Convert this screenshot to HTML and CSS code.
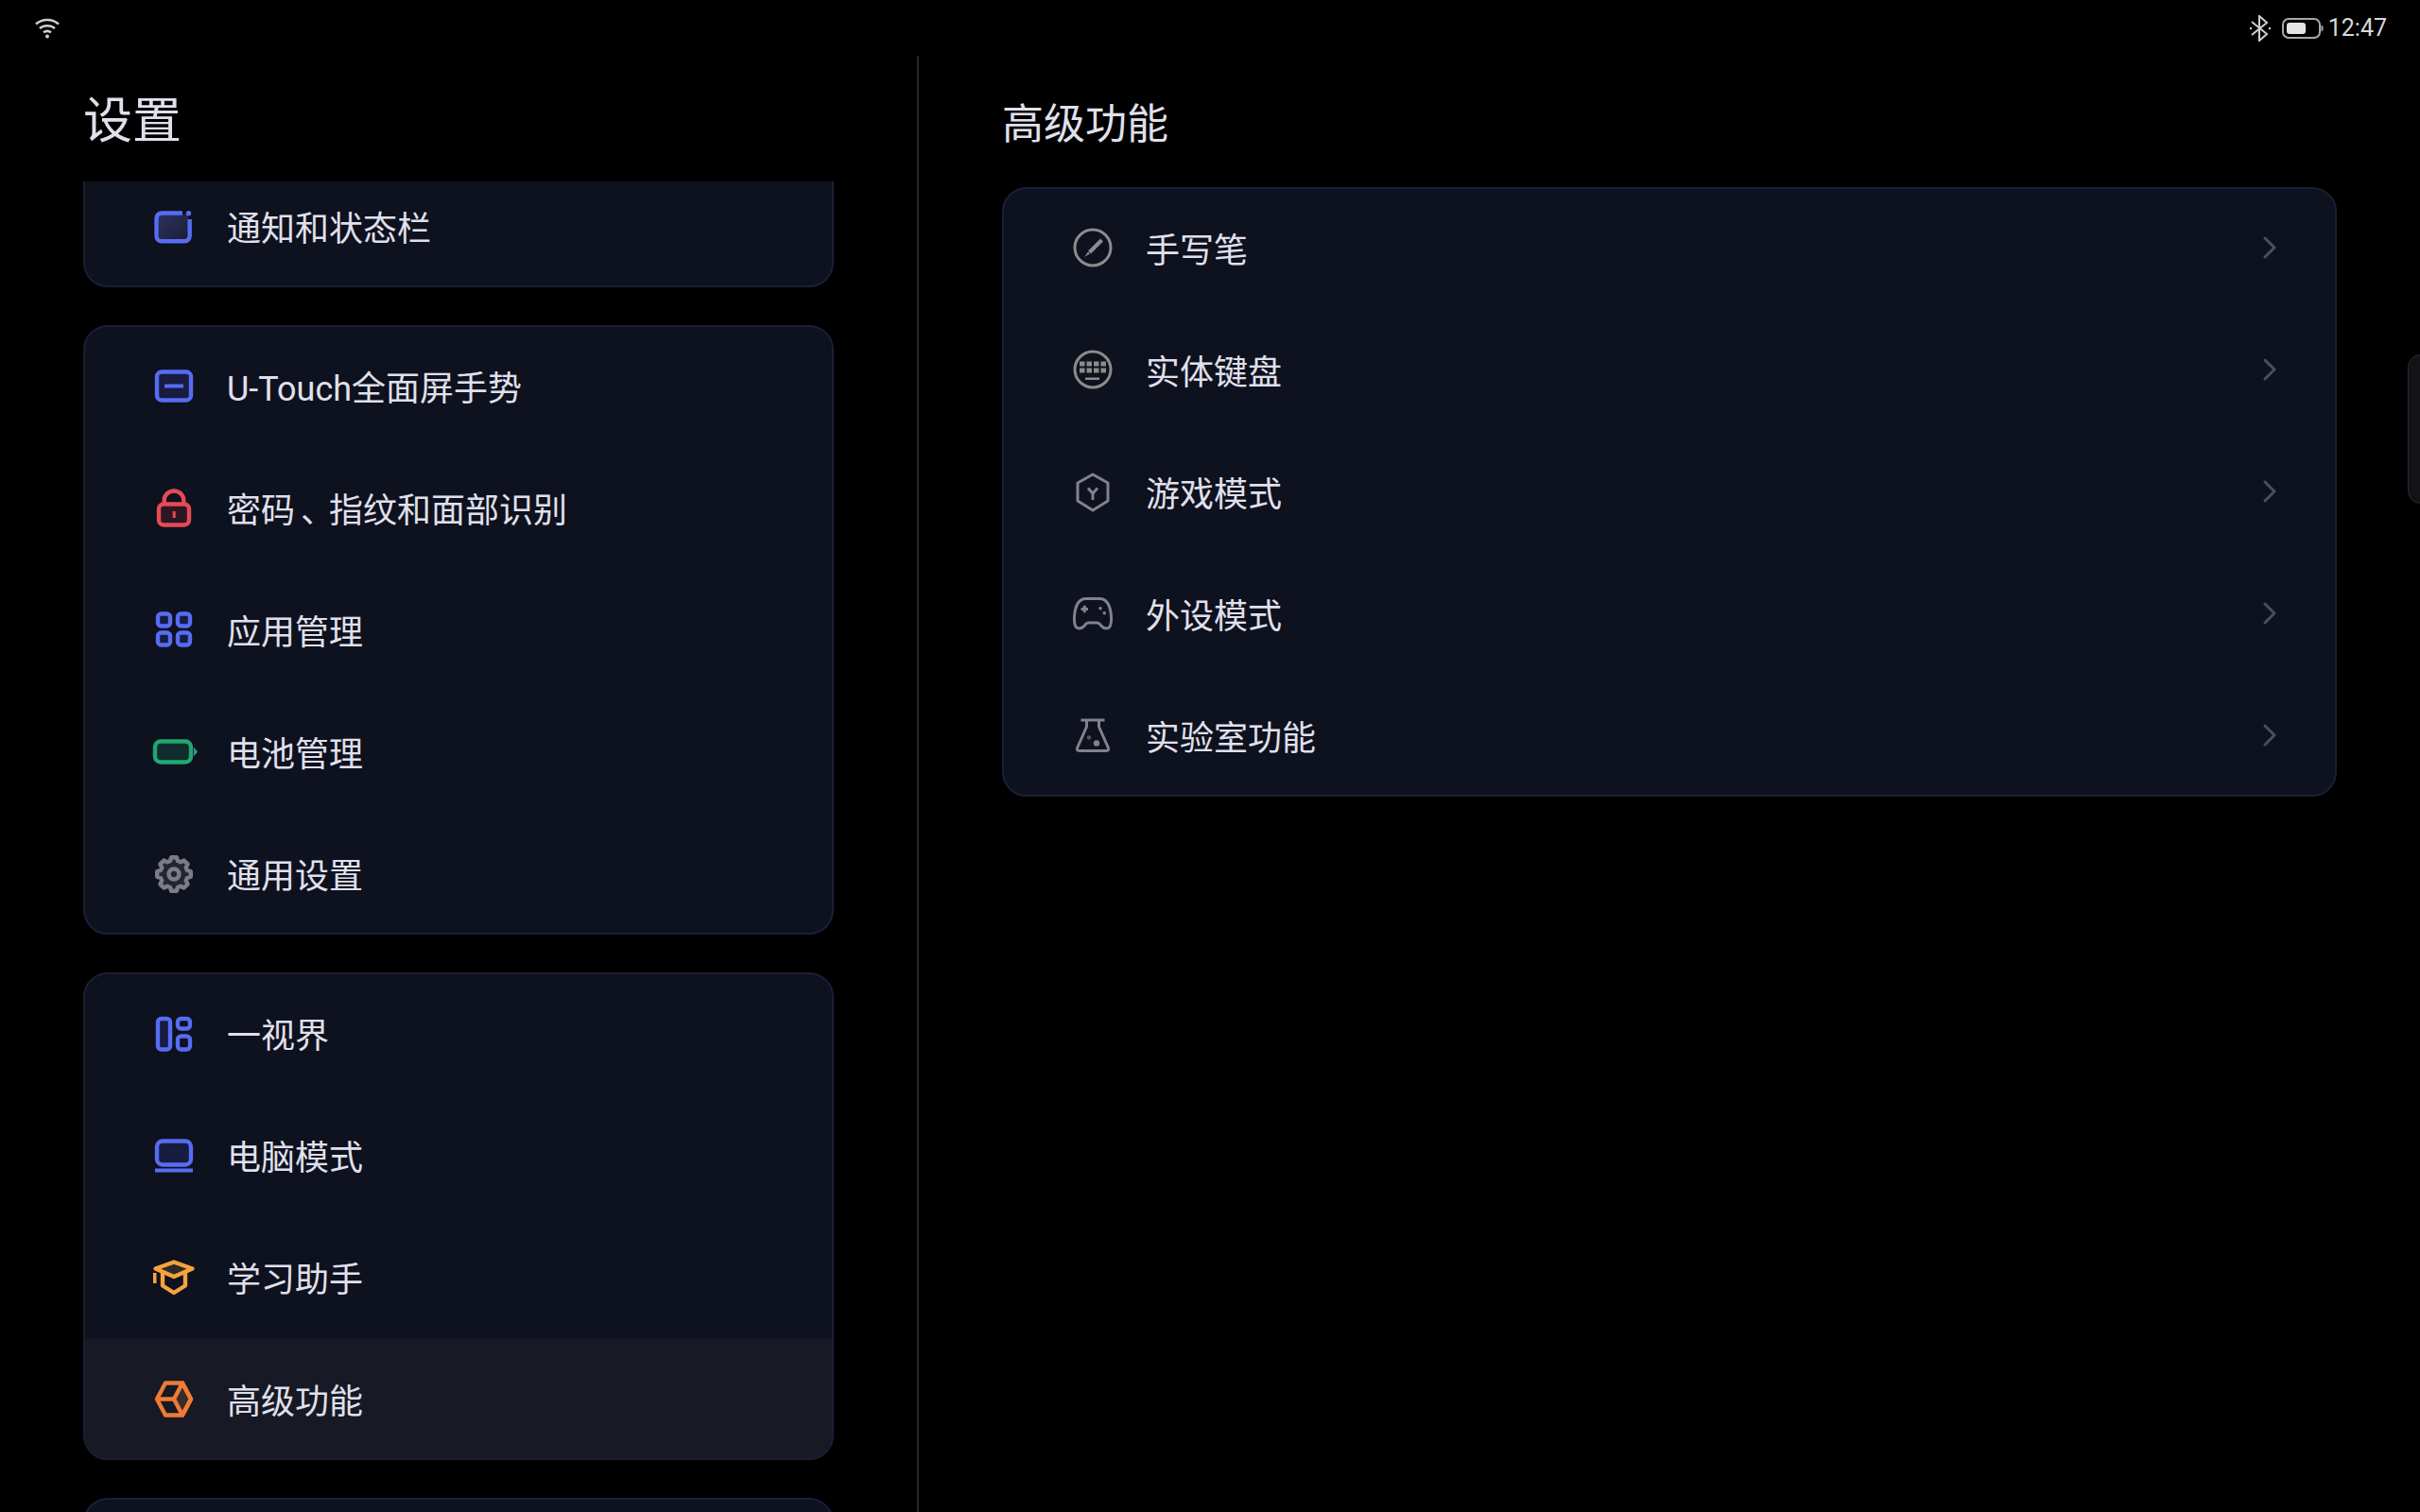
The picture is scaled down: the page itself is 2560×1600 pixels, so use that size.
FILE: index.html
```html
<!DOCTYPE html>
<html lang="zh-CN">
  <head>
    <meta charset="UTF-8" />
    <title>设置</title>
    <link rel="stylesheet" href="styles.css">
  </head>
  <body>
    <div class="statusbar">
      <svg class="wifi" width="28" height="24" viewBox="0 0 28 24">
        <path d="M2 7.5C9 1.5 19 1.5 26 7.5" />
        <path d="M6 12C10.5 8.3 17.5 8.3 22 12" />
        <path d="M10 16.3C12.4 14.6 15.6 14.6 18 16.3" />
        <circle class="solid" cx="14" cy="20.5" r="2" />
      </svg>
      <div class="status-right">
        <svg class="bt" width="24" height="28" viewBox="0 0 24 28">
          <path d="M3 7L19 20L11 27V1L19 8L3 21" />
          <circle class="solid" cx="2" cy="14" r="1.2" />
          <circle class="solid" cx="22" cy="14" r="1.2" />
        </svg>
        <svg class="batt" width="44" height="22" viewBox="0 0 44 22">
          <rect class="batt-case" x="1" y="1" width="39" height="20" rx="6" />
          <rect class="batt-level" x="5" y="5" width="20" height="12" rx="3" />
          <path class="batt-tip" d="M41.5 7.5L43.5 9V13L41.5 14.5Z" />
        </svg>
        <span class="time">12:47</span>
      </div>
    </div>

    <div class="main">
      <div class="left-pane">
        <h1 class="page-title">设置</h1>
        <div class="scroll">
          <div class="card card-scrolled">
            <div class="row">
              <svg class="icon blue" viewBox="0 0 48 48">
                <defs>
                  <linearGradient id="noticeFill" x1="0" y1="0" x2="1" y2="1">
                    <stop offset="0" stop-color="#2c3060" />
                    <stop offset="1" stop-color="#1c1f36" />
                  </linearGradient>
                </defs>
                <rect class="notice-fill" x="7" y="11" width="32" height="27" />
                <path d="M33 9.5H11a5.5 5.5 0 0 0-5.5 5.5V33.7a5.5 5.5 0 0 0 5.5 5.5H35.2a5.5 5.5 0 0 0 5.5-5.5V16" />
                <circle class="solid" cx="39.5" cy="9.8" r="2.7" />
              </svg>
              <span class="label">通知和状态栏</span>
            </div>
          </div>

          <div class="card">
            <div class="row">
              <svg class="icon blue" viewBox="0 0 48 48">
                <rect class="tint" x="6" y="8.5" width="36" height="30" rx="5" />
                <rect class="solid" x="14" y="21.5" width="20" height="4" />
              </svg>
              <span class="label">U-Touch全面屏手势</span>
            </div>
            <div class="row">
              <svg class="icon red" viewBox="0 0 48 48">
                <path d="M13.7 18V15.5a10.3 10 0 0 1 20.6 0V18" />
                <rect class="tint" x="8" y="19.5" width="32" height="22" rx="5" />
                <rect class="solid" x="22.7" y="27" width="3" height="7" />
              </svg>
              <span class="label">密<span class="stretch">码</span><span class="pinch">、</span>指纹和面部识别</span>
            </div>
            <div class="row">
              <svg class="icon blue" viewBox="0 0 48 48">
                <rect class="tint" x="7" y="6.5" width="13" height="13" rx="3.5" />
                <rect class="tint" x="28" y="6.5" width="13" height="13" rx="3.5" />
                <rect class="tint" x="7" y="26.5" width="13" height="13" rx="3.5" />
                <rect class="tint" x="28" y="26.5" width="13" height="13" rx="3.5" />
              </svg>
              <span class="label">应用管理</span>
            </div>
            <div class="row">
              <svg class="icon green" viewBox="0 0 48 48">
                <rect class="tint" x="4" y="12.5" width="38" height="22" rx="6" />
                <path class="solid" d="M45 18.5L49 23.5L45 28.5Z" />
              </svg>
              <span class="label">电池管理</span>
            </div>
            <div class="row">
              <svg class="icon gray" viewBox="-24 -24 48 48">
                <polygon class="tint" points="17.78,2.82 13.94,4 12.68,7.03 14.56,10.58 10.58,14.56 7.03,12.68 4,13.94 2.82,17.78 -2.82,17.78 -4,13.94 -7.03,12.68 -10.58,14.56 -14.56,10.58 -12.68,7.03 -13.94,4 -17.78,2.82 -17.78,-2.82 -13.94,-4 -12.68,-7.03 -14.56,-10.58 -10.58,-14.56 -7.03,-12.68 -4,-13.94 -2.82,-17.78 2.82,-17.78 4,-13.94 7.03,-12.68 10.58,-14.56 14.56,-10.58 12.68,-7.03 13.94,-4 17.78,-2.82" />
                <circle cx="0" cy="0" r="5.5" />
              </svg>
              <span class="label">通用设置</span>
            </div>
          </div>

          <div class="card">
            <div class="row">
              <svg class="icon blue" viewBox="0 0 48 48">
                <rect class="tint" x="7" y="8" width="13" height="32.5" rx="3.5" />
                <rect x="28" y="8" width="13" height="10.5" rx="3.5" />
                <rect x="28" y="26.5" width="13" height="14" rx="3.5" />
              </svg>
              <span class="label">一视界</span>
            </div>
            <div class="row">
              <svg class="icon blue" viewBox="0 0 48 48">
                <rect class="tint" x="6" y="8.5" width="36" height="25" rx="6" />
                <rect class="solid" x="4" y="37.5" width="40" height="4" />
              </svg>
              <span class="label">电脑模式</span>
            </div>
            <div class="row">
              <svg class="icon amber" viewBox="0 0 48 48">
                <path class="tint" d="M24 7.5L43.5 14.5L24 23L4.5 14.5Z" />
                <path d="M12 19V32.5L24 40L36 32.5V19" />
                <rect class="solid" x="2" y="19" width="3.5" height="11" />
              </svg>
              <span class="label">学习助手</span>
            </div>
            <div class="row row-active">
              <svg class="icon orange" viewBox="0 0 48 48">
                <path class="tint" d="M33 6.5L42 23.5L33 40.5L24 23.5Z" />
                <path d="M15 6.5H33L42 23.5L33 40.5H15L6 23.5Z" />
                <path d="M6 23.5H24" />
              </svg>
              <span class="label">高级功能</span>
            </div>
          </div>

          <div class="card card-next"></div>
        </div>
      </div>

      <div class="right-pane">
        <h2 class="section-title">高级功能</h2>
        <div class="card">
          <div class="row row-sub">
            <svg class="icon neutral thin" viewBox="0 0 48 48">
              <circle cx="24" cy="23" r="19" />
              <polygon class="solid" points="32,13.5 35,16.5 22,29.5 19,26.5" />
              <polygon class="solid" points="19,27.5 21,29.5 15,33" />
            </svg>
            <span class="label">手写笔</span>
            <svg class="chevron" viewBox="0 0 14 24"><path d="M2 2L12 12L2 22" /></svg>
          </div>
          <div class="row row-sub">
            <svg class="icon neutral thin" viewBox="0 0 48 48">
              <circle cx="24" cy="23" r="19" />
              <rect class="solid" x="10" y="14.5" width="5.5" height="5" />
              <rect class="solid" x="17.5" y="14.5" width="5.5" height="5" />
              <rect class="solid" x="25" y="14.5" width="5.5" height="5" />
              <rect class="solid" x="32.5" y="14.5" width="5.5" height="5" />
              <rect class="solid" x="10" y="21.5" width="5.5" height="5" />
              <rect class="solid" x="17.5" y="21.5" width="5.5" height="5" />
              <rect class="solid" x="25" y="21.5" width="5.5" height="5" />
              <rect class="solid" x="32.5" y="21.5" width="5.5" height="5" />
              <rect class="solid" x="16" y="31.5" width="15" height="2.5" />
            </svg>
            <span class="label">实体键盘</span>
            <svg class="chevron" viewBox="0 0 14 24"><path d="M2 2L12 12L2 22" /></svg>
          </div>
          <div class="row row-sub">
            <svg class="icon slate thin" viewBox="0 0 48 48">
              <path d="M24 5L40 14V33L24 43L8 33V14Z" />
              <path d="M19 19.5L24 25.2L29 19.5M24 25.2V32" />
            </svg>
            <span class="label">游戏模式</span>
            <svg class="chevron" viewBox="0 0 14 24"><path d="M2 2L12 12L2 22" /></svg>
          </div>
          <div class="row row-sub">
            <svg class="icon slate thin" viewBox="0 0 48 48">
              <path d="M17 7.5H31C39 7.5 42.5 14 43.5 26C44 33 43 39 38.5 39C35 39 33.5 37 31.5 34.5C30.5 33.3 29.5 33 28 33H20C18.5 33 17.5 33.3 16.5 34.5C14.5 37 13 39 9.5 39C5 39 4 33 4.5 26C5.5 14 9 7.5 17 7.5Z" />
              <path d="M11.5 18.5H19M15.3 14.7V22.3" />
              <circle class="solid" cx="32" cy="17.8" r="1.8" />
              <circle class="solid" cx="36.3" cy="22.8" r="1.8" />
            </svg>
            <span class="label">外设模式</span>
            <svg class="chevron" viewBox="0 0 14 24"><path d="M2 2L12 12L2 22" /></svg>
          </div>
          <div class="row row-sub">
            <svg class="icon slate thin" viewBox="0 0 48 48">
              <path d="M11.5 7H36.5" />
              <path d="M17.5 7V14L8 35.5Q6 39.5 10 39.5H38Q42 39.5 40 35.5L30.5 14V7" />
              <circle class="dim" cx="20" cy="25.5" r="2.2" />
              <circle class="solid" cx="28" cy="31.5" r="3.2" />
            </svg>
            <span class="label">实验室功能</span>
            <svg class="chevron" viewBox="0 0 14 24"><path d="M2 2L12 12L2 22" /></svg>
          </div>
        </div>
      </div>
    </div>

    <div class="edge-handle"></div>
  </body>
</html>
```

FILE: styles.css
```css
html,
body {
  margin: 0;
  height: 100%;
}
body {
  position: relative;
  width: 2560px;
  height: 1600px;
  overflow: hidden;
  background-color: #000;
  color: #e0e0ec;
  font-family: Roboto, "Noto Sans CJK SC", sans-serif;
}

/* status bar */
.statusbar {
  display: flex;
  justify-content: space-between;
  align-items: center;
  height: 59px;
  padding: 0 35px 0 36px;
  box-sizing: border-box;
}
.status-right {
  display: flex;
  align-items: center;
}
.wifi,
.bt {
  fill: none;
  stroke: #cfcfcf;
  stroke-width: 2.6;
}
.wifi .solid,
.bt .solid {
  fill: #cfcfcf;
  stroke: none;
}
.bt {
  stroke-width: 2;
  margin-right: 11px;
}
.batt {
  margin-right: 5px;
}
.batt-case {
  fill: none;
  stroke: #a8a8a8;
  stroke-width: 2;
}
.batt-level {
  fill: #e4e4e4;
}
.batt-tip {
  fill: #a8a8a8;
}
.time {
  font-size: 25px;
  color: #d8d8d8;
}

/* panes */
.main {
  display: flex;
  height: 1541px;
}
.left-pane {
  display: flex;
  flex-direction: column;
  width: 972px;
  box-sizing: border-box;
  padding: 0 88px;
  border-right: 2px solid #262628;
}
.right-pane {
  flex: 1;
  padding: 0 88px;
}
.page-title {
  flex: none;
  height: 133px;
  margin: 0;
  font-size: 52px;
  font-weight: 400;
  line-height: 140px;
}
.section-title {
  height: 139px;
  margin: 0;
  font-size: 44px;
  font-weight: 400;
  line-height: 146px;
}
.scroll {
  flex: 1;
  overflow: hidden;
}

/* cards */
.card {
  margin-bottom: 40px;
  border: 2px solid #1b1f36;
  border-radius: 26px;
  background-color: #0e111e;
  overflow: hidden;
}
.card-scrolled {
  margin-top: -79px;
  padding-top: 60px;
}
.card-next {
  height: 129px;
}
.row {
  display: flex;
  align-items: center;
  height: 129px;
  padding-left: 70px;
  gap: 32px;
}
.row:first-child {
  margin-top: -2px;
}
.row:last-child {
  margin-bottom: -2px;
}
.card-scrolled .row:first-child {
  margin-top: 0;
}
.row-active {
  background-color: #171924;
}
.row-sub {
  padding-right: 62px;
}
.label {
  flex: 1;
  padding-top: 6px;
  font-size: 36px;
  line-height: 48px;
}
/* the pause mark sits a little further from the character before it */
.stretch {
  letter-spacing: 6px;
}
.pinch {
  letter-spacing: -6px;
}
.chevron {
  width: 14px;
  height: 24px;
  margin-top: -2px;
  fill: none;
  stroke: #4c4e58;
  stroke-width: 3;
  stroke-linecap: round;
  stroke-linejoin: round;
}

/* icons */
.icon {
  flex: none;
  width: 48px;
  height: 48px;
  overflow: visible;
  fill: none;
  stroke: currentColor;
  stroke-width: 4.4;
  stroke-linejoin: round;
}
.icon .solid {
  fill: currentColor;
  stroke: none;
}
.icon .dim {
  fill: #55575f;
  stroke: none;
}
.icon.thin {
  stroke-width: 3;
}
.blue {
  color: #566cf2;
}
.blue .tint {
  fill: #171c40;
}
.red {
  color: #e54b54;
}
.red .tint {
  fill: #2e1722;
}
.green {
  color: #20a873;
}
.green .tint {
  fill: #112c2c;
}
.gray {
  color: #7c7c87;
}
.gray .tint {
  fill: #24252f;
}
.amber {
  color: #f5a33c;
}
.amber .tint {
  fill: #2f2824;
}
.orange {
  color: #ef7b36;
}
.orange .tint {
  fill: #3a2a2a;
}
.neutral {
  color: #8c8c8c;
}
.slate {
  color: #80828c;
}
.notice-fill {
  fill: url(#noticeFill);
  stroke: none;
}

/* handle on the right screen edge */
.edge-handle {
  position: absolute;
  top: 375px;
  right: -14px;
  width: 25px;
  height: 156px;
  border: 1px solid #2a2a2e;
  border-radius: 14px;
  background-color: #131317;
}
```
